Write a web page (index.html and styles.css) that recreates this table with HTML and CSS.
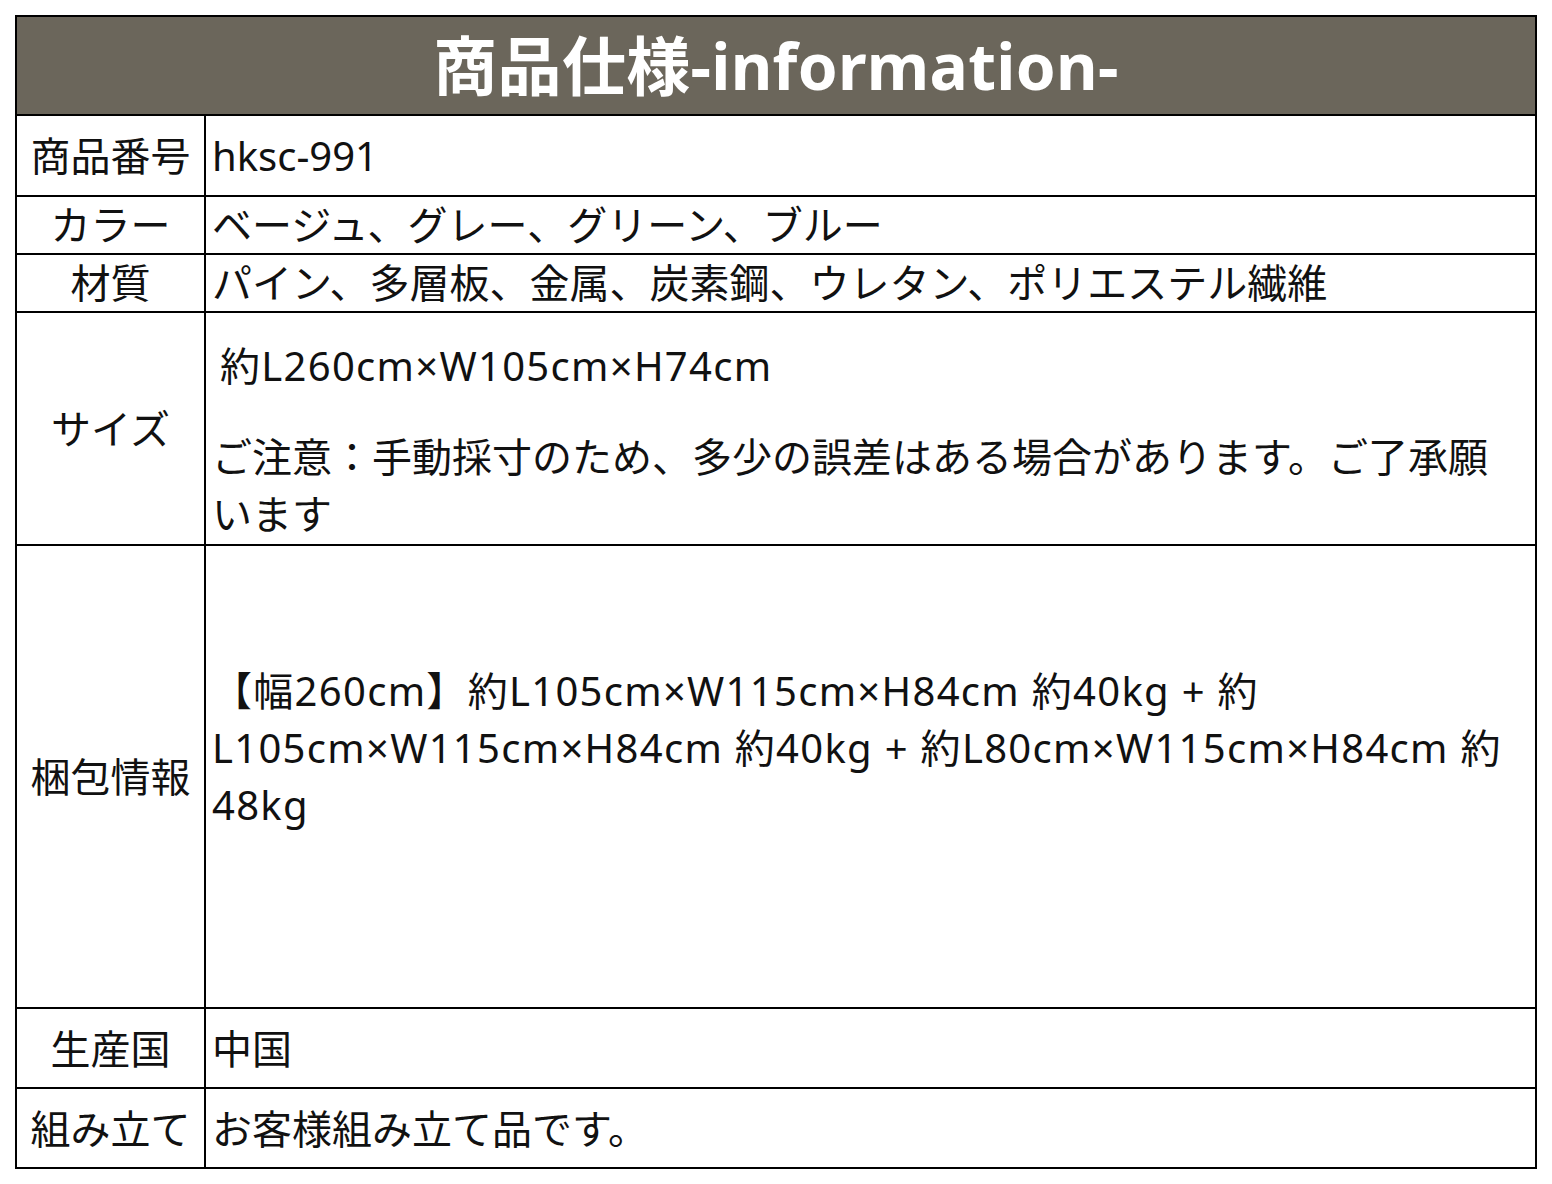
FILE: index.html
```html
<!DOCTYPE html>
<html lang="ja">
<head>
<meta charset="utf-8">
<title>商品仕様</title>
<link rel="stylesheet" href="styles.css">
</head>
<body>
<table class="spec">
  <colgroup>
    <col class="col-label">
    <col class="col-value">
  </colgroup>
  <thead>
    <tr class="r-head"><th colspan="2" class="title">商品仕様-information-</th></tr>
  </thead>
  <tbody>
    <tr class="r-80"><td class="label">商品番号</td><td class="value">hksc-991</td></tr>
    <tr class="r-58"><td class="label">カラー</td><td class="value">ベージュ、グレー、グリーン、ブルー</td></tr>
    <tr class="r-58"><td class="label">材質</td><td class="value">パイン、多層板、金属、炭素鋼、ウレタン、ポリエステル繊維</td></tr>
    <tr class="r-size"><td class="label">サイズ</td><td class="value size"><p class="dim">約L260cm×W105cm×H74cm</p><p class="note">ご注意：手動採寸のため、多少の誤差はある場合があります。ご了承願います</p></td></tr>
    <tr class="r-pack"><td class="label">梱包情報</td><td class="value pack">【幅260cm】約L105cm×W115cm×H84cm 約40kg + 約L105cm×W115cm×H84cm 約40kg + 約L80cm×W115cm×H84cm 約48kg</td></tr>
    <tr class="r-80b"><td class="label">生産国</td><td class="value">中国</td></tr>
    <tr class="r-80b"><td class="label">組み立て</td><td class="value">お客様組み立て品です。</td></tr>
  </tbody>
</table>
</body>
</html>
```

FILE: styles.css
```css
html, body {
  margin: 0;
  padding: 0;
  background: #ffffff;
}
body {
  padding: 15px 0 0 15px;
  font-family: "Noto Sans", "Noto Sans CJK JP", sans-serif;
  color: #111111;
}
.spec {
  width: 1522px;
  border-collapse: collapse;
  table-layout: fixed;
  border: 2px solid #000;
}
.col-label { width: 189px; }
.spec th, .spec td {
  border: 2px solid #000;
  padding: 0;
}
.title {
  background: #6b665b;
  color: #ffffff;
  font-size: 64px;
  font-weight: 700;
  line-height: 1;
  text-align: center;
  height: 97px;
  letter-spacing: 0.3px;
}
.label {
  text-align: center;
  font-size: 40px;
  line-height: 57px;
  white-space: nowrap;
}
.value {
  font-size: 40px;
  line-height: 57px;
  padding: 0 12px 0 6px !important;
  vertical-align: middle;
}
.r-80 td { height: 79px; }
.r-80b td { height: 78px; }
.r-58 td { height: 56px; line-height: 54px; }
.r-size .label { height: 231px; }
.r-size .value { height: 207px; }
.r-pack .label { height: 461px; }
.r-pack .value { height: 403px; }
.size {
  vertical-align: top !important;
  padding-top: 24px !important;
}
.size p { margin: 0; }
.dim { padding-left: 8px; letter-spacing: 1.3px; }
.note { margin-top: 34px !important; }
.pack {
  padding-bottom: 58px !important;
  padding-right: 4px !important;
  letter-spacing: 1.3px;
}
```
